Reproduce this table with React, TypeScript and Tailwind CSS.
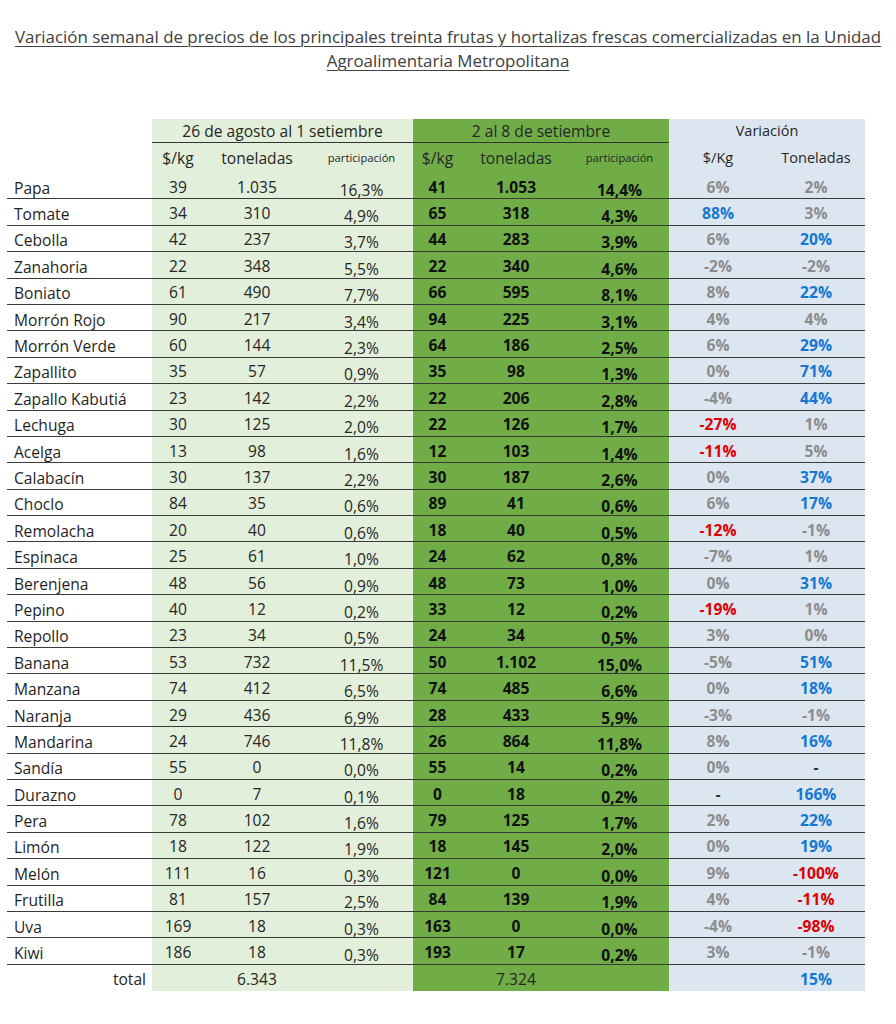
import React from "react";

type C = "g" | "b" | "r" | "k";
type Row = [string, string, string, string, string, string, string, string, C, string, C];

const rows: Row[] = [
  ["Papa", "39", "1.035", "16,3%", "41", "1.053", "14,4%", "6%", "g", "2%", "g"],
  ["Tomate", "34", "310", "4,9%", "65", "318", "4,3%", "88%", "b", "3%", "g"],
  ["Cebolla", "42", "237", "3,7%", "44", "283", "3,9%", "6%", "g", "20%", "b"],
  ["Zanahoria", "22", "348", "5,5%", "22", "340", "4,6%", "-2%", "g", "-2%", "g"],
  ["Boniato", "61", "490", "7,7%", "66", "595", "8,1%", "8%", "g", "22%", "b"],
  ["Morrón Rojo", "90", "217", "3,4%", "94", "225", "3,1%", "4%", "g", "4%", "g"],
  ["Morrón Verde", "60", "144", "2,3%", "64", "186", "2,5%", "6%", "g", "29%", "b"],
  ["Zapallito", "35", "57", "0,9%", "35", "98", "1,3%", "0%", "g", "71%", "b"],
  ["Zapallo Kabutiá", "23", "142", "2,2%", "22", "206", "2,8%", "-4%", "g", "44%", "b"],
  ["Lechuga", "30", "125", "2,0%", "22", "126", "1,7%", "-27%", "r", "1%", "g"],
  ["Acelga", "13", "98", "1,6%", "12", "103", "1,4%", "-11%", "r", "5%", "g"],
  ["Calabacín", "30", "137", "2,2%", "30", "187", "2,6%", "0%", "g", "37%", "b"],
  ["Choclo", "84", "35", "0,6%", "89", "41", "0,6%", "6%", "g", "17%", "b"],
  ["Remolacha", "20", "40", "0,6%", "18", "40", "0,5%", "-12%", "r", "-1%", "g"],
  ["Espinaca", "25", "61", "1,0%", "24", "62", "0,8%", "-7%", "g", "1%", "g"],
  ["Berenjena", "48", "56", "0,9%", "48", "73", "1,0%", "0%", "g", "31%", "b"],
  ["Pepino", "40", "12", "0,2%", "33", "12", "0,2%", "-19%", "r", "1%", "g"],
  ["Repollo", "23", "34", "0,5%", "24", "34", "0,5%", "3%", "g", "0%", "g"],
  ["Banana", "53", "732", "11,5%", "50", "1.102", "15,0%", "-5%", "g", "51%", "b"],
  ["Manzana", "74", "412", "6,5%", "74", "485", "6,6%", "0%", "g", "18%", "b"],
  ["Naranja", "29", "436", "6,9%", "28", "433", "5,9%", "-3%", "g", "-1%", "g"],
  ["Mandarina", "24", "746", "11,8%", "26", "864", "11,8%", "8%", "g", "16%", "b"],
  ["Sandía", "55", "0", "0,0%", "55", "14", "0,2%", "0%", "g", "-", "k"],
  ["Durazno", "0", "7", "0,1%", "0", "18", "0,2%", "-", "k", "166%", "b"],
  ["Pera", "78", "102", "1,6%", "79", "125", "1,7%", "2%", "g", "22%", "b"],
  ["Limón", "18", "122", "1,9%", "18", "145", "2,0%", "0%", "g", "19%", "b"],
  ["Melón", "111", "16", "0,3%", "121", "0", "0,0%", "9%", "g", "-100%", "r"],
  ["Frutilla", "81", "157", "2,5%", "84", "139", "1,9%", "4%", "g", "-11%", "r"],
  ["Uva", "169", "18", "0,3%", "163", "0", "0,0%", "-4%", "g", "-98%", "r"],
  ["Kiwi", "186", "18", "0,3%", "193", "17", "0,2%", "3%", "g", "-1%", "g"],
];

const colorCls: Record<C, string> = {
  g: "text-[#8c8c8c]",
  b: "text-[#1677d2]",
  r: "text-[#dc0000]",
  k: "text-[#333333]",
};

const GRID = "grid grid-cols-[145px_52px_106px_103px_49px_108px_99px_98px_98px] leading-[18px]";
const LG = "bg-[#e2efda]";
const DG = "bg-[#70ad47]";
const BL = "bg-[#dce6f1]";

export default function App() {
  return (
    <div
      className="w-[896px] h-[1024px] bg-white text-[#262626] overflow-hidden"
      style={{ fontFamily: '"Open Sans", "Noto Sans", sans-serif' }}
    >
      <div className="pt-[25px] text-center text-[16.9px] leading-[24px] text-[#404040] underline decoration-[1px] underline-offset-[3px]">
        <div>Variación semanal de precios de los principales treinta frutas y hortalizas frescas comercializadas en la Unidad</div>
        <div>Agroalimentaria Metropolitana</div>
      </div>

      <div className="ml-[7px] mt-[46px] w-[858px] text-[15.6px]">
        {/* group header */}
        <div className={`${GRID} h-[24px]`}>
          <div />
          <div className={`col-span-3 ${LG} border-b border-[#333] flex items-center justify-center`}>
            26 de agosto al 1 setiembre
          </div>
          <div className={`col-span-3 ${DG} border-b border-[#333] flex items-center justify-center`}>
            2 al 8 de setiembre
          </div>
          <div className={`col-span-2 ${BL} flex items-center justify-center text-[14.5px]`}>
            Variación
          </div>
        </div>
        {/* sub header */}
        <div className={`${GRID} h-[30px]`}>
          <div />
          <div className={`${LG} flex items-center justify-center`}>$/kg</div>
          <div className={`${LG} flex items-center justify-center`}>toneladas</div>
          <div className={`${LG} flex items-center justify-center text-[11.2px]`}>participación</div>
          <div className={`${DG} flex items-center justify-center`}>$/kg</div>
          <div className={`${DG} flex items-center justify-center`}>toneladas</div>
          <div className={`${DG} flex items-center justify-center text-[11.2px]`}>participación</div>
          <div className={`${BL} flex items-center justify-center text-[14.5px]`}>$/Kg</div>
          <div className={`${BL} flex items-center justify-center text-[14.5px]`}>Toneladas</div>
        </div>
        {/* data */}
        {rows.map((r) => (
          <div key={r[0]} className={`${GRID} h-[26.4px] border-b border-[#3a3a3a]`}>
            <div className="flex items-center pl-[7px] pt-[2px] text-[#1f1f1f]">
              <span className="translate-y-[1px]">{r[0]}</span>
            </div>
            <div className={`${LG} flex items-center justify-center pt-[2px]`}>{r[1]}</div>
            <div className={`${LG} flex items-center justify-center pt-[2px]`}>{r[2]}</div>
            <div className={`${LG} flex items-center justify-center pt-[2px]`}>
              <span className="translate-y-[3px]">{r[3]}</span>
            </div>
            <div className={`${DG} flex items-center justify-center pt-[2px] font-bold text-[#111]`}>{r[4]}</div>
            <div className={`${DG} flex items-center justify-center pt-[2px] font-bold text-[#111]`}>{r[5]}</div>
            <div className={`${DG} flex items-center justify-center pt-[2px] font-bold text-[#111]`}>
              <span className="translate-y-[3px]">{r[6]}</span>
            </div>
            <div className={`${BL} flex items-center justify-center pt-[2px] font-bold ${colorCls[r[8]]}`}>{r[7]}</div>
            <div className={`${BL} flex items-center justify-center pt-[2px] font-bold ${colorCls[r[10]]}`}>{r[9]}</div>
          </div>
        ))}
        {/* total */}
        <div className={`${GRID} h-[26px]`}>
          <div className="flex items-center justify-end pr-[6px] pt-[2px]">total</div>
          <div className={LG} />
          <div className={`${LG} flex items-center justify-center pt-[2px]`}>6.343</div>
          <div className={LG} />
          <div className={DG} />
          <div className={`${DG} flex items-center justify-center pt-[2px]`}>7.324</div>
          <div className={DG} />
          <div className={BL} />
          <div className={`${BL} flex items-center justify-center pt-[2px] font-bold text-[#1677d2]`}>15%</div>
        </div>
      </div>
    </div>
  );
}
